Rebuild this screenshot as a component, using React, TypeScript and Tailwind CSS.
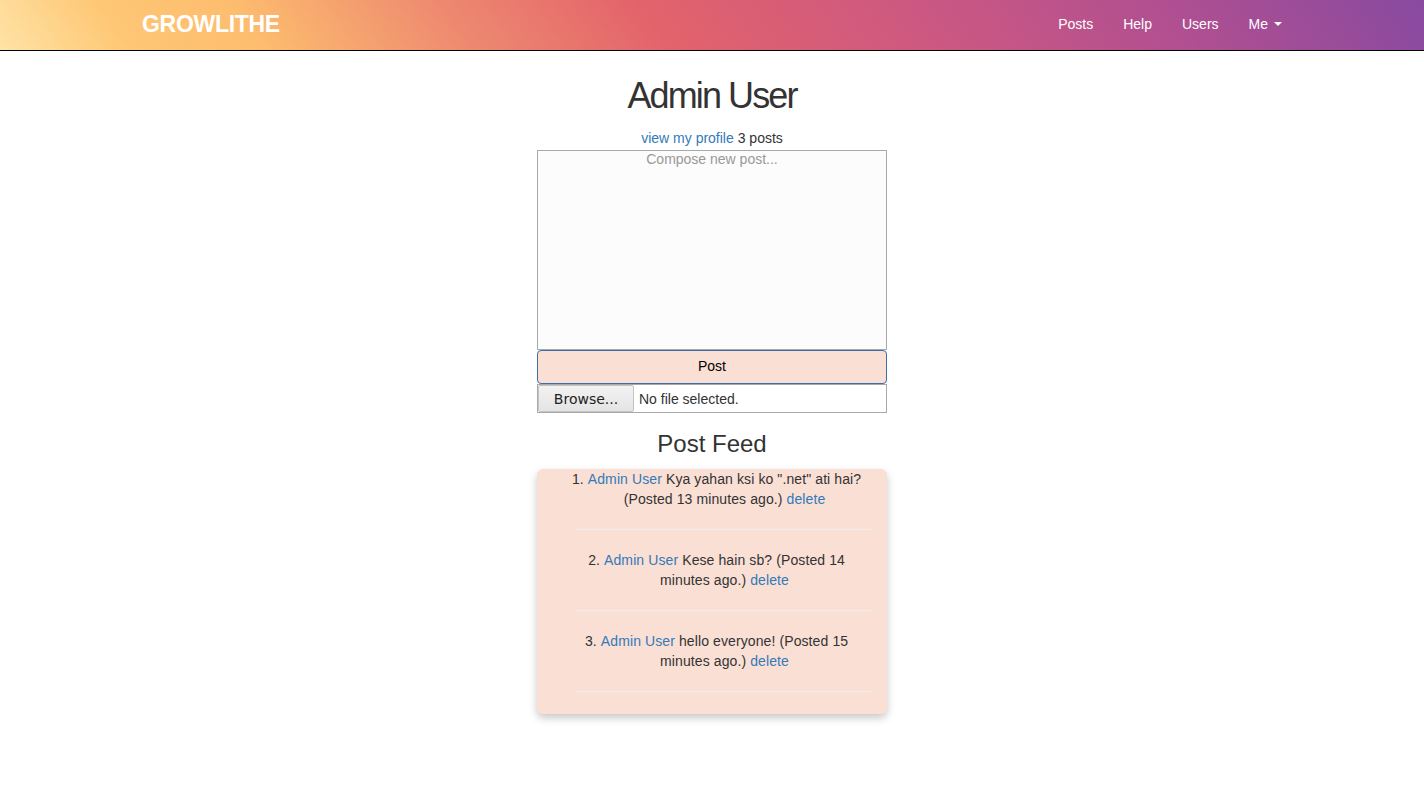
import React from "react";

const posts = [
  { id: 1, author: "Admin User", body: 'Kya yahan ksi ko ".net" ati hai?', ago: "13 minutes ago." },
  { id: 2, author: "Admin User", body: "Kese hain sb?", ago: "14 minutes ago." },
  { id: 3, author: "Admin User", body: "hello everyone!", ago: "15 minutes ago." },
];

function Navbar() {
  return (
    <div className="h-[51px] border-b border-black bg-[linear-gradient(55deg,#ffe3a6_0%,#fec775_9%,#fdbd6e_18%,#ee8a70_32%,#e3636b_46%,#cc5882_65%,#b04f91_82%,#884aa0_100%)]">
      <div className="mx-auto flex h-[50px] w-[1170px] items-center justify-between px-[15px] pb-[2px]">
        <a href="#" className="text-[23px] font-bold leading-[48px] tracking-[-0.3px] text-white">
          GROWLITHE
        </a>
        <ul className="-mr-[15px] flex text-[14px] text-white">
          <li><a href="#" className="block px-[15px] leading-[48px]">Posts</a></li>
          <li><a href="#" className="block px-[15px] leading-[48px]">Help</a></li>
          <li><a href="#" className="block px-[15px] leading-[48px]">Users</a></li>
          <li>
            <a href="#" className="flex items-center px-[15px] leading-[48px]">
              Me
              <span className="ml-[6px] inline-block h-0 w-0 border-x-[4px] border-t-[4px] border-x-transparent border-t-white" />
            </a>
          </li>
        </ul>
      </div>
    </div>
  );
}

export default function App() {
  const [text, setText] = React.useState("");

  return (
    <div className="min-h-screen bg-white font-['Liberation_Sans',Arial,sans-serif] text-[14px] leading-[20px] text-[#333]">
      <Navbar />
      <div className="mx-auto flex w-[350px] flex-col items-stretch text-center">
        <h1 className="mt-[25px] mb-[12px] text-[36px] leading-[40px] tracking-[-1.9px] text-[#333]">
          Admin User
        </h1>
        <div>
          <a href="#" className="text-[#337ab7]">view my profile</a> 3 posts
        </div>
        <textarea
          className="mt-[2px] block h-[200px] w-[350px] resize-none border border-[#a9a9a9] bg-[#fcfcfc] px-[2px] pt-0 pb-[2px] text-center text-[14px] leading-[17px] outline-none placeholder:text-[#999]"
          placeholder="Compose new post..."
          value={text}
          onChange={(e) => setText(e.target.value)}
        />
        <button className="h-[34px] w-full rounded-[4px] border border-[#3a6ea5] bg-[#fadfd5] pb-[3px] text-[14px] text-black">
          Post
        </button>
        <div className="flex h-[29px] items-center border border-[#a9a9a9] bg-white">
          <span className="flex h-[27px] w-[96px] items-center justify-center rounded-[2px] border border-[#c4c4c4] bg-[linear-gradient(#f2f2f2,#e4e4e4)] font-['DejaVu_Sans',sans-serif] text-[14px] text-[#222]">
            Browse...
          </span>
          <span className="ml-[5px] text-[#333]">No file selected.</span>
        </div>
        <h3 className="mt-[18px] mb-[12px] text-[24px] leading-[26px] text-[#333]">Post Feed</h3>
        <div className="rounded-[6px] bg-[#fadfd5] pr-[15px] pb-[2px] shadow-[0_4px_8px_rgba(0,0,0,0.22)]">
          <ol className="pl-[40px]">
            {posts.map((p) => (
              <li key={p.id}>
                <div className="px-[3px] text-center tracking-[0.1px]">
                  <span className="-ml-[16px] inline-block w-[16px] pr-[4px] text-right">{p.id}.</span>
                  <a href="#" className="text-[#337ab7]">{p.author}</a> {p.body} (Posted {p.ago}){" "}
                  <a href="#" className="text-[#337ab7]">delete</a>
                </div>
                <hr className="my-[20px] border-t border-[#eee]" />
              </li>
            ))}
          </ol>
        </div>
      </div>
    </div>
  );
}
